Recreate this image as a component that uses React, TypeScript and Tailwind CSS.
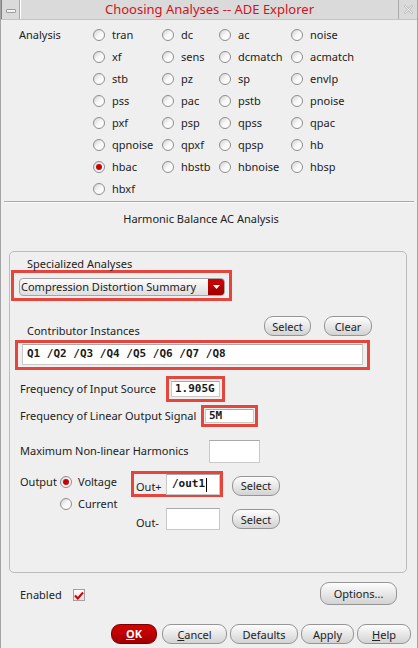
import React from "react";

const RED_BOX = "border-[3px] border-[#e4463e]";

function Radio({ on }: { on?: boolean }) {
  return (
    <span className="flex h-[12px] w-[12px] shrink-0 items-center justify-center rounded-full border border-[#8e8e8e] bg-linear-to-br from-[#d0d0d0] via-[#f8f8f8] to-white">
      {on && <span className="h-[6px] w-[6px] rounded-full bg-[#cc0000]" />}
    </span>
  );
}

function Btn({
  children,
  className = "",
}: {
  children: React.ReactNode;
  className?: string;
}) {
  return (
    <button
      className={
        "flex h-[20px] shrink-0 items-center justify-center rounded-[9px] border border-[#959595] bg-linear-to-b from-[#fdfdfd] to-[#d3d3d3] text-[11px] leading-none text-[#222] " +
        className
      }
    >
      {children}
    </button>
  );
}

function Field({
  value,
  caret,
  className = "",
}: {
  value?: string;
  caret?: boolean;
  className?: string;
}) {
  return (
    <div
      className={
        "flex items-center border border-[#c9c9c9] border-t-[#a9a9a9] bg-white pl-[3px] font-['DejaVu_Sans_Mono',monospace] text-[11px] font-bold text-[#1a1a1a] " +
        className
      }
    >
      {value}
      {caret && <span className="ml-[1px] h-[14px] w-px bg-black" />}
    </div>
  );
}

const analyses = [
  ["tran", "dc", "ac", "noise"],
  ["xf", "sens", "dcmatch", "acmatch"],
  ["stb", "pz", "sp", "envlp"],
  ["pss", "pac", "pstb", "pnoise"],
  ["pxf", "psp", "qpss", "qpac"],
  ["qpnoise", "qpxf", "qpsp", "hb"],
  ["hbac", "hbstb", "hbnoise", "hbsp"],
  ["hbxf"],
];

export default function App() {
  return (
    <div className="h-[648px] w-[418px] overflow-hidden border-x border-[#a3a3a3] bg-[#efefef] font-['Noto_Sans',sans-serif] text-[11px] text-[#222]">
      {/* title bar */}
      <div className="flex h-[20px] border-b border-[#c4c4c4] bg-[#dadada]">
        <div className="flex w-[19px] items-center justify-center border-l border-l-[#6a86b0] border-r border-r-[#a8a8a8]">
          <span className="mt-[3px] h-[4px] w-[10px] rounded-[1px] border border-[#9d9d9d] bg-[#f2f2f2]" />
        </div>
        <div className="flex flex-1 items-center justify-center border-l border-white text-[13px] text-[#d3121c]">
          Choosing Analyses -- ADE Explorer
        </div>
        <div className="flex w-[19px] items-center justify-center border-l border-[#a8a8a8]">
          <svg width="11" height="11" viewBox="0 0 11 11">
            <path
              d="M2 2 L9 9 M9 2 L2 9"
              stroke="#c2c2c2"
              strokeWidth="2.4"
              strokeLinecap="round"
            />
            <path
              d="M2 2 L9 9 M9 2 L2 9"
              stroke="#f4f4f4"
              strokeWidth="0.8"
              strokeLinecap="round"
            />
          </svg>
        </div>
      </div>

      {/* analysis choices */}
      <div className="flex pt-[4px]">
        <div className="h-[22px] w-[92px] pl-[18px] leading-[22px]">Analysis</div>
        <div className="grid grid-cols-[69px_57px_72px_80px]">
          {analyses.flat().map((a) => (
            <div key={a} className="flex h-[22px] items-center gap-[7px]">
              <Radio on={a === "hbac"} />
              <span>{a}</span>
            </div>
          ))}
        </div>
      </div>

      <div className="mx-[3px] mt-[1px] h-px bg-[#a9a9a9]" />
      <div className="mx-[3px] h-px bg-[#fafafa]" />

      <div className="mt-[9px] pr-[16px] text-center leading-[14px]">
        Harmonic Balance AC Analysis
      </div>

      {/* group box */}
      <div className="ml-[8px] mt-[25px] h-[322px] w-[398px] rounded-[5px] border border-[#bcbcbc]">
        <div className="mt-[5px] h-[13px] pl-[17px] leading-[13px]">Specialized Analyses</div>
        <div className={"ml-[1px] w-[221px] pb-[2px] pl-[5px] pr-[4px] pt-[5px] " + RED_BOX}>
          <div className="flex h-[18px] w-[206px] items-center overflow-hidden rounded-[4px] border border-[#a5a5a5] bg-linear-to-b from-[#fcfcfc] to-[#dedede]">
            <span className="flex-1 pl-[1px] text-[11px]">Compression Distortion Summary</span>
            <span className="flex h-full w-[16px] items-center justify-center bg-linear-to-b from-[#d20000] to-[#9e0000]">
              <svg width="7" height="4" viewBox="0 0 7 4">
                <path d="M0 0 H7 L3.5 4 Z" fill="#fff" />
              </svg>
            </span>
          </div>
        </div>

        <div className="mt-[15px] flex h-[22px]">
          <span className="w-[254px] self-end pl-[17px] leading-[14px]">
            Contributor Instances
          </span>
          <Btn className="w-[47px]">Select</Btn>
          <Btn className="ml-[13px] w-[48px]">Clear</Btn>
        </div>

        <div className={"ml-[5px] mt-[2px] h-[30px] w-[355px] pb-[2px] pl-[4px] pr-[4px] pt-[1px] " + RED_BOX}>
          <Field value="Q1 /Q2 /Q3 /Q4 /Q5 /Q6 /Q7 /Q8" className="h-full w-full pl-[4px]" />
        </div>

        <div className="mt-[6px] flex h-[26px] items-center">
          <span className="w-[156px] pl-[10px]">Frequency of Input Source</span>
          <div className={"h-[26px] w-[59px] p-[2px] " + RED_BOX}>
            <Field value="1.905G" className="h-full w-full" />
          </div>
        </div>

        <div className="mt-[3px] flex h-[22px] items-center">
          <span className="w-[191px] pl-[10px]">Frequency of Linear Output Signal</span>
          <div className={"h-[22px] w-[57px] p-[1px] " + RED_BOX}>
            <Field value="5M" className="h-full w-full" />
          </div>
        </div>

        <div className="mt-[13px] flex h-[23px] items-center">
          <span className="w-[199px] pl-[10px]">Maximum Non-linear Harmonics</span>
          <Field className="h-[23px] w-[51px]" />
        </div>

        <div className="mt-[8px] flex">
          <div className="w-[121px] pl-[10px]">
            <div className="flex h-[22px] items-center">
              <span className="w-[40px]">Output</span>
              <Radio on />
              <span className="ml-[6px]">Voltage</span>
            </div>
            <div className="flex h-[22px] items-center pl-[40px]">
              <Radio />
              <span className="ml-[6px]">Current</span>
            </div>
          </div>
          <div>
            <div className="flex items-center">
              <div className={"flex h-[26px] w-[92px] pl-[2px] " + RED_BOX}>
                <span className="w-[30px] self-end leading-[14px]">Out+</span>
                <Field value="/out1" caret className="h-[21px] w-[54px] pl-[5px]" />
              </div>
              <Btn className="ml-[9px] mt-[3px] w-[48px]">Select</Btn>
            </div>
            <div className="mt-[11px] flex items-center pl-[5px]">
              <span className="w-[30px] self-end leading-[14px]">Out-</span>
              <Field className="h-[22px] w-[54px]" />
              <Btn className="ml-[12px] w-[48px]">Select</Btn>
            </div>
          </div>
        </div>
      </div>

      {/* enabled / options */}
      <div className="mt-[9px] flex h-[23px] items-center">
        <span className="mt-[3px] w-[72px] pl-[19px]">Enabled</span>
        <span className="mt-[3px] flex h-[12px] w-[12px] items-center justify-center border border-[#a0a0a0] bg-linear-to-b from-white to-[#e2e2e2]">
          <svg width="10" height="9" viewBox="0 0 10 9">
            <path d="M1 4.5 L3.8 7.5 L9 1.5" stroke="#d40000" strokeWidth="2" fill="none" />
          </svg>
        </span>
        <Btn className="ml-auto mr-[20px] h-[23px] w-[77px]">Options...</Btn>
      </div>

      {/* bottom buttons */}
      <div className="mt-[19px] flex justify-end pr-[6px]">
        <button className="flex h-[20px] w-[46px] items-center justify-center rounded-[9px] border border-[#7a0000] bg-linear-to-b from-[#d80000] to-[#a00000] text-[11px] font-bold text-white">
          <span className="underline">O</span>K
        </button>
        <Btn className="ml-[5px] w-[65px]">
          <span className="underline">C</span>ancel
        </Btn>
        <Btn className="ml-[3px] w-[68px]">Defaults</Btn>
        <Btn className="ml-[3px] w-[53px]">Apply</Btn>
        <Btn className="ml-[3px] w-[54px]">
          <span className="underline">H</span>elp
        </Btn>
      </div>
    </div>
  );
}
